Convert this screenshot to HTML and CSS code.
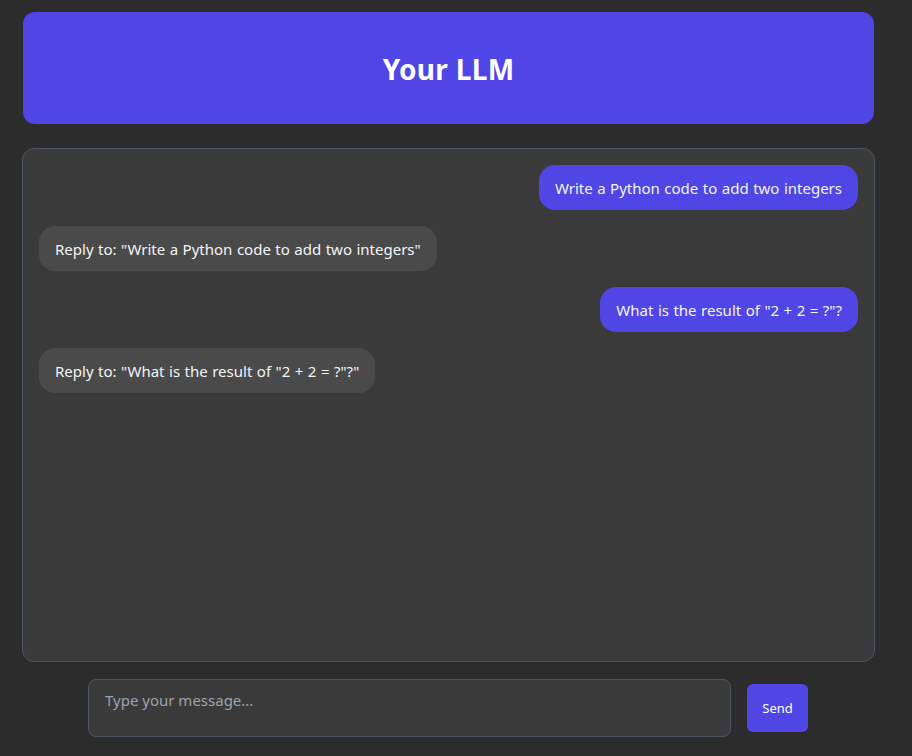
FILE: index.html
```html
<!DOCTYPE html>
<html lang="en">
<head>
<meta charset="utf-8">
<title>Your LLM</title>
<link rel="stylesheet" href="styles.css">
</head>
<body>
<div class="app">
  <header class="header">
    <h1 class="title">Your LLM</h1>
  </header>
  <main class="chat">
    <div class="msg user">Write a Python code to add two integers</div>
    <div class="msg bot">Reply to: "Write a Python code to add two integers"</div>
    <div class="msg user">What is the result of "2 + 2 = ?"?</div>
    <div class="msg bot">Reply to: "What is the result of "2 + 2 = ?"?"</div>
  </main>
  <form class="composer">
    <textarea class="input" placeholder="Type your message..."></textarea>
    <button type="button" class="send">Send</button>
  </form>
</div>
</body>
</html>
```
FILE: styles.css
```css
* { box-sizing: border-box; }
html, body { margin: 0; padding: 0; }
body {
  background: #2c2c2c;
  font-family: "Noto Sans", "Open Sans", sans-serif;
  color: #f3f4f6;
}
.app {
  width: 851px;
  margin-left: 23px;
  padding-top: 12px;
  display: flex;
  flex-direction: column;
}
.header {
  background: #4f46e5;
  border-radius: 12px;
  height: 112px;
  display: flex;
  align-items: center;
  justify-content: center;
}
.title {
  margin: 0;
  font-size: 28px;
  font-weight: 700;
  color: #ffffff;
  letter-spacing: 0.3px;
  padding-top: 2px;
}
.chat {
  margin-top: 24px;
  margin-left: -1px;
  margin-right: -1px;
  height: 514px;
  background: #3a3a3a;
  border: 1px solid #4b5563;
  border-radius: 12px;
  padding: 16px;
  display: flex;
  flex-direction: column;
  gap: 16px;
}
.msg {
  padding: 0 16px;
  height: 45px;
  display: flex;
  align-items: center;
  border-radius: 16px;
  font-size: 15px;
  word-spacing: 0.6px;
  color: #f3f4f6;
  white-space: nowrap;
}
.user {
  align-self: flex-end;
  background: #4f46e5;
}
.bot {
  align-self: flex-start;
  background: #4a4a4a;
}
.composer {
  width: 720px;
  margin: 17px 0 0 65px;
  display: flex;
  align-items: center;
  gap: 16px;
}
.input {
  flex: 1;
  height: 58px;
  background: #3a3a3a;
  border: 1px solid #4b5563;
  border-radius: 8px;
  padding: 10px 16px;
  font-family: inherit;
  font-size: 15px;
  color: #f3f4f6;
  resize: none;
  outline: none;
}
.input::placeholder { color: #9ca3af; }
.send {
  width: 61px;
  height: 48px;
  background: #4f46e5;
  border: none;
  border-radius: 6px;
  color: #ffffff;
  font-family: inherit;
  font-size: 13px;
}
```
